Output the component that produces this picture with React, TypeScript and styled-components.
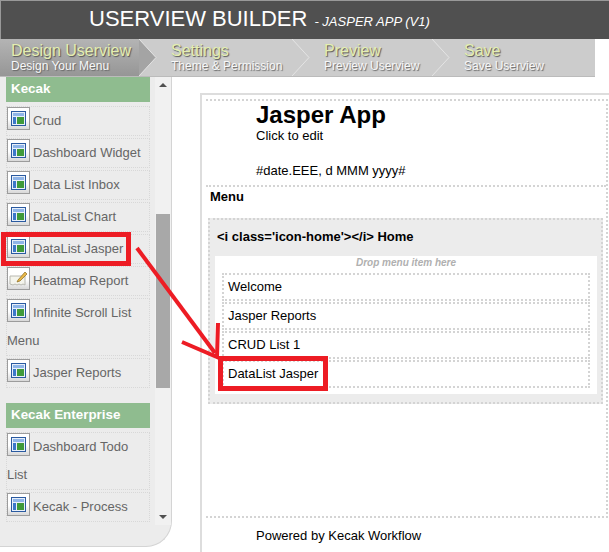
import React from 'react';
import styled, { createGlobalStyle } from 'styled-components';

const GlobalStyle = createGlobalStyle`
  html, body {
    margin: 0;
    padding: 0;
    background: #fff;
    overflow: hidden;
  }
  * { box-sizing: border-box; }
  body {
    font-family: "Liberation Sans", Arial, sans-serif;
    font-size: 13px;
    color: #000;
  }
`;

const Page = styled.div`
  position: relative;
  width: 609px;
  height: 552px;
  overflow: hidden;
`;

/* Header */

const Header = styled.header`
  height: 39px;
  background: #505050;
  border-top: 1px solid #999;
  border-left: 1px solid #999;
  padding-left: 88px;
  display: flex;
  align-items: baseline;
  color: #fff;
`;

const Title = styled.h1`
  margin: 0;
  font-size: 22px;
  line-height: 36px;
  font-weight: normal;
`;

const SubTitle = styled.span`
  margin-left: 7px;
  font-size: 13px;
  font-style: italic;
`;

/* Steps */

const Steps = styled.nav`
  width: 595px;
  height: 38px;
  display: flex;
  background: #ccc;
  border-bottom: 1px solid #bbb;
`;

const Step = styled.div<{ $width: number; $active?: boolean }>`
  position: relative;
  width: ${(p) => p.$width}px;
  height: 37px;
  padding-top: 3px;
  padding-left: ${(p) => (p.$active ? 11 : 14)}px;
  background: ${(p) => (p.$active ? 'linear-gradient(#b4b4b4, #969696) no-repeat' : 'transparent')};
  background-size: calc(100% - 17px) 100%;
`;

const StepName = styled.div`
  font-size: 16px;
  line-height: 18px;
  color: #e4eeb0;
  text-shadow: 1px 1px 1px #555;
`;

const StepHint = styled.div`
  font-size: 12px;
  line-height: 13px;
  color: #f8f8f8;
  text-shadow: 1px 1px 1px #666;
`;

const StepArrow = styled.svg`
  position: absolute;
  top: 0;
  right: 0;
  width: 18px;
  height: 37px;
`;

/* Main */

const Main = styled.main`
  display: flex;
  height: 475px;
`;

const Sidebar = styled.aside`
  flex: 0 0 172px;
  height: 470px;
  display: flex;
  background: #ececec;
  border: 1px solid #d4d4d4;
  border-top: 0;
  border-left: 0;
  border-bottom-right-radius: 26px;
  padding-left: 6px;
`;

const PaletteClip = styled.div`
  width: 144px;
  height: 448px;
  overflow: hidden;
`;

const GroupTitle = styled.h3<{ $spaced?: boolean }>`
  margin: ${(p) => (p.$spaced ? '15px' : '0')} 0 4px;
  height: ${(p) => (p.$spaced ? 25 : 25)}px;
  padding-left: 5px;
  background: #8fbc8f;
  color: #fff;
  font-size: 13.4px;
  line-height: ${(p) => (p.$spaced ? 24 : 23)}px;
  font-weight: bold;
`;

const Element = styled.div`
  margin-bottom: 2px;
  border: 1px dotted #d8d8d8;
  color: #666;
  font-size: 13px;
  line-height: 28px;
`;

const IconBox = styled.span`
  display: inline-flex;
  align-items: center;
  justify-content: center;
  vertical-align: top;
  width: 23px;
  height: 23px;
  margin: 0 3px 0 0;
  background: linear-gradient(#fff 55%, #d8d8d8);
  border: 1px solid #9c9c9c;
`;

const ScrollBar = styled.div`
  margin-left: 5px;
  width: 16px;
  height: 448px;
  background: #f1f1f1;
  display: flex;
  flex-direction: column;
  align-items: center;
`;

const ScrollArrow = styled.div<{ $down?: boolean }>`
  width: 0;
  height: 0;
  margin-top: ${(p) => (p.$down ? '127px' : '6px')};
  border-left: 4px solid transparent;
  border-right: 4px solid transparent;
  border-bottom: ${(p) => (p.$down ? '0' : '4px solid #505050')};
  border-top: ${(p) => (p.$down ? '4px solid #505050' : '0')};
`;

const ScrollThumb = styled.div`
  margin-top: 127px;
  width: 14px;
  height: 174px;
  background: #a8a8a8;
`;

/* Canvas */

const Canvas = styled.section`
  flex: 0 0 409px;
  margin: 16px 0 0 28px;
  border-left: 2px solid #ddd;
  border-top: 2px solid #ddd;
  padding: 4px 0 0 4px;
`;

const Sheet = styled.div`
  height: 419px;
  margin-right: 1px;
  border-top: 2px dotted #d4d4d4;
  border-right: 2px dotted #d4d4d4;
  border-bottom: 2px dotted #d4d4d4;
`;

const AppHead = styled.div`
  height: 84px;
  padding-left: 50px;
`;

const AppName = styled.div`
  font-size: 24px;
  line-height: 28px;
  font-weight: bold;
`;

const AppLine = styled.div<{ $gap?: number }>`
  margin-top: ${(p) => p.$gap ?? 0}px;
  font-size: 13px;
  line-height: 16px;
`;

const MenuArea = styled.div`
  border-top: 2px dotted #d4d4d4;
`;

const MenuLabel = styled.div`
  height: 31px;
  padding: 1px 0 0 4px;
  font-size: 13px;
  line-height: 18px;
  font-weight: bold;
`;

const MenuBlock = styled.div`
  margin: 0 3px 0 2px;
  height: 186px;
  padding: 9px 4px 0 5px;
  background: #ececec;
  border: 2px dotted #d4d4d4;
`;

const MenuName = styled.div`
  height: 27px;
  padding-left: 2px;
  font-size: 13px;
  line-height: 16px;
  font-weight: bold;
`;

const DropZone = styled.div`
  height: 138px;
  padding: 0 7px;
  background: #fff;
`;

const DropHint = styled.div`
  height: 17px;
  text-align: center;
  font-size: 10px;
  line-height: 13px;
  font-weight: bold;
  font-style: italic;
  color: #b0b0b0;
`;

const MenuItem = styled.div`
  height: 28px;
  margin-bottom: 1px;
  padding-left: 4px;
  border: 2px dotted #d4d4d4;
  font-size: 13px;
  line-height: 23px;
`;

const Footer = styled.div`
  margin-top: 9px;
  padding-left: 50px;
  font-size: 13px;
  line-height: 17px;
`;

const Annotation = styled.svg`
  position: absolute;
  left: 0;
  top: 0;
  width: 609px;
  height: 552px;
  pointer-events: none;
`;

const ListIcon: React.FC = () => (
  <svg width="15" height="15" viewBox="0 0 15 15">
    <rect x="0.5" y="0.5" width="14" height="14" fill="#e8f0fa" stroke="#2a5aa0" />
    <rect x="2" y="2" width="11" height="3" fill="#8fb5e8" />
    <rect x="2" y="6" width="3" height="7" fill="#3c78c8" />
    <rect x="6" y="6" width="7" height="7" fill="#3f9a3a" />
  </svg>
);

const NoteIcon: React.FC = () => (
  <svg width="20" height="17" viewBox="0 0 20 17">
    <path d="M1 6h15v9l-2-1-2 1-2-1-2 1-2-1-2 1-3-1z" fill="#f4f4ec" stroke="#b8b8b0" />
    <path d="M9 10l7-8 2 2-7 7-3 1z" fill="#e8b84a" stroke="#8a6a20" strokeWidth="0.7" />
  </svg>
);

type PaletteEntry = { label: string; note?: boolean };

const kecak: PaletteEntry[] = [
  { label: 'Crud' },
  { label: 'Dashboard Widget' },
  { label: 'Data List Inbox' },
  { label: 'DataList Chart' },
  { label: 'DataList Jasper' },
  { label: 'Heatmap Report', note: true },
  { label: 'Infinite Scroll List Menu' },
  { label: 'Jasper Reports' },
];

const enterprise: PaletteEntry[] = [
  { label: 'Dashboard Todo List' },
  { label: 'Kecak - Process' },
];

const steps = [
  { name: 'Design Userview', hint: 'Design Your Menu', width: 157, active: true },
  { name: 'Settings', hint: 'Theme & Permission', width: 153 },
  { name: 'Preview', hint: 'Preview Userview', width: 140 },
  { name: 'Save', hint: 'Save Userview', width: 145 },
];

const renderEntry = (entry: PaletteEntry) => (
  <Element key={entry.label}>
    <IconBox>{entry.note ? <NoteIcon /> : <ListIcon />}</IconBox>
    {entry.label}
  </Element>
);

const App: React.FC = () => {
  return (
    <Page>
      <GlobalStyle />
      <Header>
        <Title>USERVIEW BUILDER</Title>
        <SubTitle>- JASPER APP (V1)</SubTitle>
      </Header>
      <Steps>
        {steps.map((step, i) => (
          <Step key={step.name} $width={step.width} $active={step.active}>
            <StepName>{step.name}</StepName>
            <StepHint>{step.hint}</StepHint>
            {i < 3 && (
              <StepArrow viewBox="0 0 18 37">
                {step.active && <path d="M0 0L17 18.5L0 37z" fill="#a4a4a4" />}
                <path d="M0 0L17 18.5L0 37" fill="none" stroke="#e4e4e4" />
              </StepArrow>
            )}
          </Step>
        ))}
      </Steps>
      <Main>
        <Sidebar>
          <PaletteClip>
            <GroupTitle>Kecak</GroupTitle>
            {kecak.map(renderEntry)}
            <GroupTitle $spaced>Kecak Enterprise</GroupTitle>
            {enterprise.map(renderEntry)}
          </PaletteClip>
          <ScrollBar>
            <ScrollArrow />
            <ScrollThumb />
            <ScrollArrow $down />
          </ScrollBar>
        </Sidebar>
        <Canvas>
          <Sheet>
            <AppHead>
              <AppName>Jasper App</AppName>
              <AppLine $gap={-1}>Click to edit</AppLine>
              <AppLine $gap={19}>#date.EEE, d MMM yyyy#</AppLine>
            </AppHead>
            <MenuArea>
              <MenuLabel>Menu</MenuLabel>
              <MenuBlock>
                <MenuName>&lt;i class='icon-home'&gt;&lt;/i&gt; Home</MenuName>
                <DropZone>
                  <DropHint>Drop menu item here</DropHint>
                  <MenuItem>Welcome</MenuItem>
                  <MenuItem>Jasper Reports</MenuItem>
                  <MenuItem>CRUD List 1</MenuItem>
                  <MenuItem>DataList Jasper</MenuItem>
                </DropZone>
              </MenuBlock>
            </MenuArea>
          </Sheet>
          <Footer>Powered by Kecak Workflow</Footer>
        </Canvas>
      </Main>
      <Annotation viewBox="0 0 609 552">
        <g fill="none" stroke="#ed1c24" strokeWidth="5">
          <rect x="3.5" y="234.5" width="125" height="29" />
          <rect x="220.5" y="358.5" width="105" height="30" />
          <path d="M137 248L215 353" strokeWidth="4" />
          <path d="M218 323L217 357L182 342" strokeWidth="4" />
        </g>
      </Annotation>
    </Page>
  );
};

export default App;
